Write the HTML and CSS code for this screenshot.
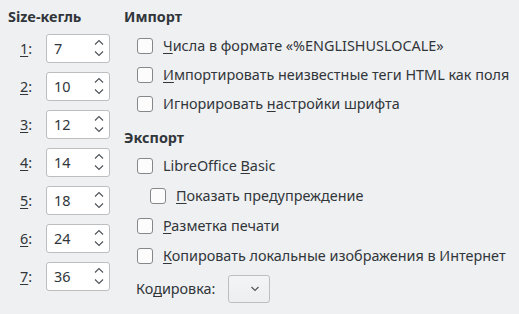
FILE: index.html
```html
<!DOCTYPE html>
<html lang="ru">
<head>
  <meta charset="utf-8">
  <title>HTML-документ</title>
  <link rel="stylesheet" href="styles.css">
</head>
<body>
  <div class="dialog">
    <div class="sizes">
      <div class="heading">Size-кегль</div>
      <div class="size-row"><span class="size-label"><u>1</u>:</span><div class="spin"><span class="spin-value">7</span><svg class="spin-arrows" width="10" height="20" viewBox="0 0 10 20"><path d="M1 5.5 L5 1.5 L9 5.5 M1 12.5 L5 16.5 L9 12.5" fill="none" stroke="#4d5257" stroke-width="1.1"/></svg></div></div>
      <div class="size-row"><span class="size-label"><u>2</u>:</span><div class="spin"><span class="spin-value">10</span><svg class="spin-arrows" width="10" height="20" viewBox="0 0 10 20"><path d="M1 5.5 L5 1.5 L9 5.5 M1 12.5 L5 16.5 L9 12.5" fill="none" stroke="#4d5257" stroke-width="1.1"/></svg></div></div>
      <div class="size-row"><span class="size-label"><u>3</u>:</span><div class="spin"><span class="spin-value">12</span><svg class="spin-arrows" width="10" height="20" viewBox="0 0 10 20"><path d="M1 5.5 L5 1.5 L9 5.5 M1 12.5 L5 16.5 L9 12.5" fill="none" stroke="#4d5257" stroke-width="1.1"/></svg></div></div>
      <div class="size-row"><span class="size-label"><u>4</u>:</span><div class="spin"><span class="spin-value">14</span><svg class="spin-arrows" width="10" height="20" viewBox="0 0 10 20"><path d="M1 5.5 L5 1.5 L9 5.5 M1 12.5 L5 16.5 L9 12.5" fill="none" stroke="#4d5257" stroke-width="1.1"/></svg></div></div>
      <div class="size-row"><span class="size-label"><u>5</u>:</span><div class="spin"><span class="spin-value">18</span><svg class="spin-arrows" width="10" height="20" viewBox="0 0 10 20"><path d="M1 5.5 L5 1.5 L9 5.5 M1 12.5 L5 16.5 L9 12.5" fill="none" stroke="#4d5257" stroke-width="1.1"/></svg></div></div>
      <div class="size-row"><span class="size-label"><u>6</u>:</span><div class="spin"><span class="spin-value">24</span><svg class="spin-arrows" width="10" height="20" viewBox="0 0 10 20"><path d="M1 5.5 L5 1.5 L9 5.5 M1 12.5 L5 16.5 L9 12.5" fill="none" stroke="#4d5257" stroke-width="1.1"/></svg></div></div>
      <div class="size-row"><span class="size-label"><u>7</u>:</span><div class="spin"><span class="spin-value">36</span><svg class="spin-arrows" width="10" height="20" viewBox="0 0 10 20"><path d="M1 5.5 L5 1.5 L9 5.5 M1 12.5 L5 16.5 L9 12.5" fill="none" stroke="#4d5257" stroke-width="1.1"/></svg></div></div>
    </div>

    <div class="options">
      <div class="heading">Импорт</div>
      <div class="check-row"><span class="check"></span><span><u>Ч</u>исла в формате «%ENGLISHUSLOCALE»</span></div>
      <div class="check-row"><span class="check"></span><span><u>И</u>мпортировать неизвестные теги HTML как поля</span></div>
      <div class="check-row"><span class="check"></span><span>Игнорировать <u>н</u>астройки шрифта</span></div>

      <div class="heading heading-export">Экспорт</div>
      <div class="check-row tall"><span class="check"></span><span>LibreOffice <u>B</u>asic</span></div>
      <div class="check-row tall sub"><span class="check"></span><span><u>П</u>оказать предупреждение</span></div>
      <div class="check-row tall"><span class="check"></span><span><u>Р</u>азметка печати</span></div>
      <div class="check-row tall"><span class="check"></span><span><u>К</u>опировать локальные изображения в Интернет</span></div>

      <div class="encoding-row">
        <span class="encoding-label">Ко<u>д</u>ировка:</span>
        <div class="combo"><svg width="10" height="6" viewBox="0 0 10 6"><path d="M1.5 1 L5 4.5 L8.5 1" fill="none" stroke="#4d5257" stroke-width="1.1"/></svg></div>
      </div>
    </div>
  </div>
</body>
</html>
```

FILE: styles.css
```css
:root {
  --bg: #eff0f1;
  --text: #31363b;
  --field-border: #bcbebf;
  --check-border: #85888b;
}

* {
  box-sizing: border-box;
}

body {
  margin: 0;
  background: var(--bg);
  color: var(--text);
  font-family: "Noto Sans", sans-serif;
  font-size: 14.4px;
  line-height: 18px;
  width: 519px;
  height: 314px;
  overflow: hidden;
}

u {
  text-decoration-thickness: 1px;
  text-underline-offset: 2px;
}

.dialog {
  display: flex;
  padding: 8px 0 0 8px;
}

.heading {
  font-weight: bold;
  height: 18px;
}

/* left column: font size spin boxes */
.sizes {
  width: 116px;
}

.sizes .heading {
  margin-bottom: 8px;
}

.size-row {
  display: flex;
  align-items: center;
  height: 29px;
  margin-bottom: 9px;
}

.size-label {
  width: 38px;
  padding-left: 12px;
}

.spin {
  display: flex;
  align-items: center;
  justify-content: space-between;
  width: 64px;
  height: 29px;
  background: #fff;
  border: 1px solid var(--field-border);
  border-radius: 3px;
  padding: 0 5px 0 7px;
}

.spin-arrows {
  display: block;
}

/* right column: import / export options */
.check-row {
  display: flex;
  align-items: center;
  height: 29px;
  padding-left: 13px;
}

.check-row.tall {
  height: 30px;
}

.options > .heading + .check-row {
  margin-top: 5px;
}

.options > .heading-export + .check-row {
  margin-top: 4px;
}

.heading-export {
  margin-top: 11px;
}

.check-row.sub {
  padding-left: 26px;
}

.check {
  width: 16px;
  height: 16px;
  border: 1px solid var(--check-border);
  border-radius: 3px;
  background: #fcfcfc;
  margin-right: 10px;
  flex: none;
}

.encoding-row {
  display: flex;
  align-items: center;
  margin-top: 4px;
  padding-left: 12px;
  height: 28px;
}

.encoding-label {
  width: 92px;
}

.combo {
  display: flex;
  align-items: center;
  justify-content: flex-end;
  width: 42px;
  height: 28px;
  border: 1px solid var(--field-border);
  border-radius: 3px;
  background: linear-gradient(#f3f4f5, #eceeef);
  padding-right: 9px;
}

.combo svg {
  display: block;
}
```
